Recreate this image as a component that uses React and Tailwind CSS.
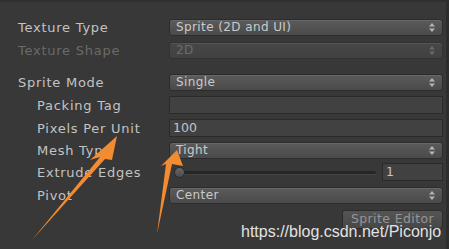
import React from 'react';

const font = { fontFamily: '"DejaVu Sans", Verdana, sans-serif' };

const Arrows = () => (
  <svg
    className="absolute left-0 top-0 pointer-events-none"
    width="449"
    height="249"
    viewBox="0 0 449 249"
  >
    <polygon
      points="32,238 100,155 90,158 117,134 112,158 105,157"
      fill="#f38b33"
    />
    <polygon
      points="157,232 166,162 161,164 177,148 183,164 172,162"
      fill="#f38b33"
    />
  </svg>
);

const UpDown = ({ dim }) => (
  <svg width="6" height="9" viewBox="0 0 6 9" className="mr-[7px] shrink-0">
    <polygon points="3,0 6,3.5 0,3.5" fill={dim ? '#6a6a6a' : '#b5b5b5'} />
    <polygon points="3,9 6,5.5 0,5.5" fill={dim ? '#6a6a6a' : '#b5b5b5'} />
  </svg>
);

const Dropdown = ({ value, dim }) => (
  <div
    className={
      'flex-1 h-[17px] flex items-center justify-between rounded-[3px] border shadow-[inset_0_1px_0_rgba(255,255,255,0.08)] ' +
      (dim
        ? 'border-[#323232] bg-gradient-to-b from-[#474747] to-[#414141] text-[#6c6c6c]'
        : 'border-[#2c2c2c] bg-gradient-to-b from-[#5b5b5b] to-[#4a4a4a] text-[#cacaca]')
    }
  >
    <span className="pl-[6px] text-[12px] leading-none tracking-[0.4px]">{value}</span>
    <UpDown dim={dim} />
  </div>
);

const Field = ({ value }) => (
  <div className="flex-1 h-[18px] flex items-center bg-[#414141] border border-[#2a2a2a] text-[#c4c4c4] text-[12.5px] leading-none pl-[3px]">
    {value}
  </div>
);

const Row = ({ label, indent, dim, children, h = 'h-[22px]' }) => (
  <div className={'flex items-center ' + h}>
    <div
      className={
        'w-[151px] shrink-0 text-[13px] tracking-[0.75px] leading-none ' +
        (indent ? 'pl-[19px] ' : '') +
        (dim ? 'text-[#6a6a6a]' : 'text-[#c3c3c3]')
      }
    >
      {label}
    </div>
    {children}
  </div>
);

export default function App() {
  return (
    <div
      className="relative w-[449px] h-[249px] overflow-hidden bg-[#383838] border-t-[2px] border-t-[#2f2f2f] border-r-[3px] border-r-[#2d2d2d]"
      style={font}
    >
      <div className="flex flex-col pl-[18px] pr-[3px] pt-[14px]">
        <Row label="Texture Type">
          <Dropdown value="Sprite (2D and UI)" />
        </Row>
        <div className="h-[1px]" />
        <Row label="Texture Shape" dim>
          <Dropdown value="2D" dim />
        </Row>
        <div className="h-[10px]" />
        <Row label="Sprite Mode">
          <Dropdown value="Single" />
        </Row>
        <div className="h-[1px]" />
        <Row label="Packing Tag" indent>
          <Field value="" />
        </Row>
        <div className="h-[1px]" />
        <Row label="Pixels Per Unit" indent>
          <Field value="100" />
        </Row>
        <Row label="Mesh Type" indent>
          <Dropdown value="Tight" />
        </Row>
        <Row label="Extrude Edges" indent>
          <div className="flex-1 flex items-center">
            <div className="relative flex-1 h-[3px] ml-[6px] mr-[6px] bg-[#262626] rounded-full shadow-[0_1px_0_rgba(255,255,255,0.06)]">
              <div className="absolute left-[-1px] top-[-4px] w-[11px] h-[11px] rounded-full bg-gradient-to-b from-[#666] to-[#4d4d4d] border border-[#2a2a2a]" />
            </div>
            <div className="w-[61px] h-[18px] flex items-center bg-[#414141] border border-[#2a2a2a] text-[#c4c4c4] text-[12.5px] leading-none pl-[3px]">
              1
            </div>
          </div>
        </Row>
        <div className="h-[1px]" />
        <Row label="Pivot" indent>
          <Dropdown value="Center" />
        </Row>
        <div className="flex justify-end mt-[4px]">
          <div className="w-[101px] h-[19px] flex items-center justify-center rounded-[3px] border border-[#2c2c2c] bg-gradient-to-b from-[#555] to-[#474747] text-[#959595] text-[12.5px] leading-none tracking-[0.4px]">
            Sprite Editor
          </div>
        </div>
      </div>
      <div
        className="absolute left-[241px] top-[222px] text-[16px] leading-none text-[#e2e2e2]"
        style={{ fontFamily: '"Liberation Sans", Arial, sans-serif' }}
      >
        https://blog.csdn.net/Piconjo
      </div>
      <Arrows />
    </div>
  );
}
